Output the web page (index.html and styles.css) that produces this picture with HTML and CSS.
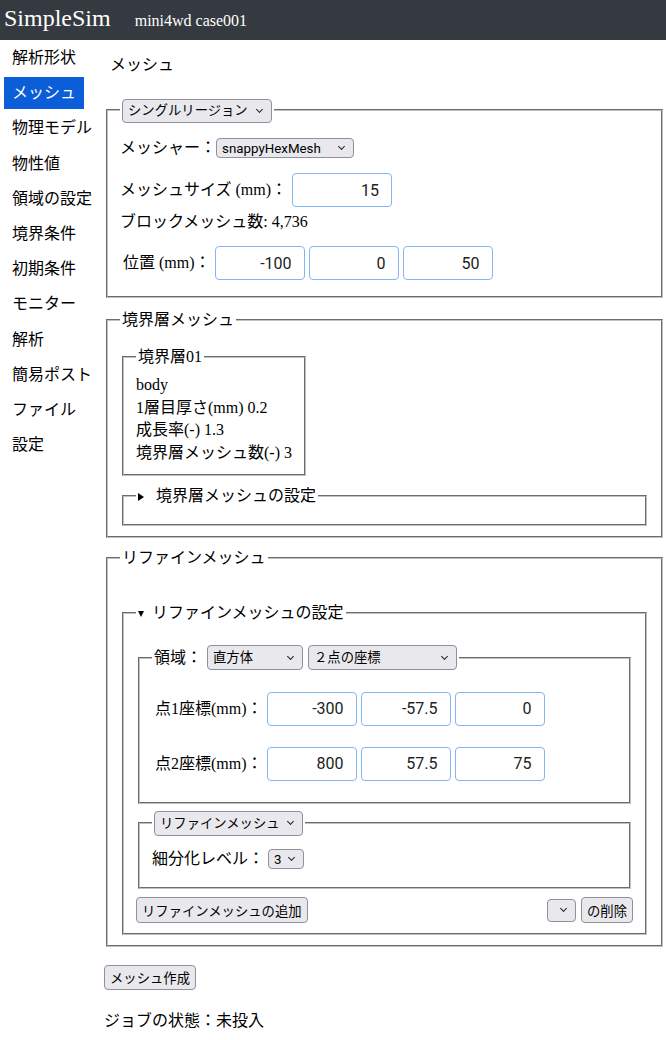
FILE: index.html
```html
<!DOCTYPE html>
<html lang="ja">
<head>
    <meta charset="UTF-8">
    <title>SimpleSim - メッシュ</title>
    <link rel="stylesheet" href="styles.css">
</head>
<body>
    <header class="topbar">
        <span class="brand">SimpleSim</span>
        <span class="case-name">mini4wd case001</span>
    </header>

    <div class="layout">
        <nav class="sidebar">
            <a class="nav-item">解析形状</a>
            <a class="nav-item active">メッシュ</a>
            <a class="nav-item">物理モデル</a>
            <a class="nav-item">物性値</a>
            <a class="nav-item">領域の設定</a>
            <a class="nav-item">境界条件</a>
            <a class="nav-item">初期条件</a>
            <a class="nav-item">モニター</a>
            <a class="nav-item">解析</a>
            <a class="nav-item">簡易ポスト</a>
            <a class="nav-item">ファイル</a>
            <a class="nav-item">設定</a>
        </nav>

        <main class="content">
            <h2 class="page-title">メッシュ</h2>

            <!-- ベースメッシュ -->
            <fieldset class="group">
                <legend>
                    <span class="sel"><select class="sel-region"><option>シングルリージョン</option></select></span>
                </legend>
                <div class="row row-mesher">
                    <span class="label">メッシャー：</span>
                    <span class="sel"><select class="sel-mesher"><option>snappyHexMesh</option></select></span>
                </div>
                <div class="row row-size">
                    <span class="label">メッシュサイズ (mm)：</span>
                    <input class="num num-wide" type="text" value="15">
                </div>
                <div class="row row-count">ブロックメッシュ数: 4,736</div>
                <div class="row row-pos">
                    <span class="label indent">位置 (mm)：</span>
                    <input class="num" type="text" value="-100">
                    <input class="num" type="text" value="0">
                    <input class="num" type="text" value="50">
                </div>
            </fieldset>

            <!-- 境界層 -->
            <fieldset class="group spaced">
                <legend>境界層メッシュ</legend>
                <fieldset class="layer-box">
                    <legend>境界層01</legend>
                    <div class="layer-lines">
                        <div>body</div>
                        <div>1層目厚さ(mm) 0.2</div>
                        <div>成長率(-) 1.3</div>
                        <div>境界層メッシュ数(-) 3</div>
                    </div>
                </fieldset>
                <fieldset class="collapsed">
                    <legend><span class="tri-right"></span>境界層メッシュの設定</legend>
                </fieldset>
            </fieldset>

            <!-- リファイン -->
            <fieldset class="group refine-group">
                <legend>リファインメッシュ</legend>
                <fieldset class="refine-box">
                    <legend><span class="tri-down"></span>リファインメッシュの設定</legend>

                    <fieldset class="region-box">
                        <legend class="legend-row">
                            領域：
                            <span class="sel"><select class="sel-shape"><option>直方体</option></select></span>
                            <span class="sel"><select class="sel-method"><option>２点の座標</option></select></span>
                        </legend>
                        <div class="coords">
                            <div class="row">
                                <span class="label indent">点1座標(mm)：</span>
                                <input class="num" type="text" value="-300">
                                <input class="num" type="text" value="-57.5">
                                <input class="num" type="text" value="0">
                            </div>
                            <div class="row">
                                <span class="label indent">点2座標(mm)：</span>
                                <input class="num" type="text" value="800">
                                <input class="num" type="text" value="57.5">
                                <input class="num" type="text" value="75">
                            </div>
                        </div>
                    </fieldset>

                    <fieldset class="level-box">
                        <legend>
                            <span class="sel"><select class="sel-refine"><option>リファインメッシュ</option></select></span>
                        </legend>
                        <div class="row row-level">
                            <span class="label">細分化レベル：</span>
                            <span class="sel"><select class="sel-level"><option>3</option></select></span>
                        </div>
                    </fieldset>

                    <div class="actions">
                        <button class="btn">リファインメッシュの追加</button>
                        <div class="actions-right">
                            <span class="sel"><select class="sel-empty"><option></option></select></span>
                            <button class="btn">の削除</button>
                        </div>
                    </div>
                </fieldset>
            </fieldset>

            <button class="btn btn-make">メッシュ作成</button>
            <p class="job-status">ジョブの状態：未投入</p>
        </main>
    </div>
</body>
</html>
```

FILE: styles.css
```css
body {
    margin: 0;
    padding: 0;
    font-family: "Liberation Serif", "Noto Sans CJK JP", serif;
    font-size: 16px;
    color: #000;
    background: #fff;
}

.topbar {
    height: 40px;
    box-sizing: border-box;
    background: #343a40;
    color: #fff;
    display: flex;
    align-items: baseline;
    padding: 0 4px 4px;
    line-height: 36px;
}
.brand {
    font-size: 24px;
}
.case-name {
    font-size: 16px;
    margin-left: 24px;
}

.layout {
    display: flex;
}
.sidebar {
    width: 104px;
    flex: none;
    box-sizing: border-box;
    padding: 2px 0 0 4px;
    display: flex;
    flex-direction: column;
    gap: 3.2px;
}
.nav-item {
    width: 80px;
    height: 32px;
    line-height: 32px;
    padding: 0 8px;
    box-sizing: border-box;
    white-space: nowrap;
    color: #000;
    cursor: pointer;
}
.nav-item.active {
    background: #0b5ed7;
    color: #fff;
}

.content {
    flex: 1;
    min-width: 0;
    padding-right: 1px;
}
.page-title {
    font-size: 16px;
    font-weight: normal;
    line-height: 24px;
    margin: 13px 0 21px 6px;
}

fieldset {
    margin: 0 2px;
    padding: 5.6px 12px 10px;
    border: 2px groove #c0c0c0;
    min-width: 0;
}
legend {
    padding: 0 2px;
    line-height: 24px;
}
.spaced {
    margin-top: 10px;
}

.row {
    display: flex;
    align-items: center;
}
.label {
    line-height: 20px;
    white-space: nowrap;
}
.indent {
    padding-left: 3px;
}
.row-mesher {
    margin-top: 10px;
}
.row-size {
    margin-top: 15px;
    gap: 5px;
}
.row-count {
    margin-top: 3px;
    line-height: 24px;
}
.row-pos {
    margin-top: 12px;
    margin-bottom: 6px;
}
.row-pos .label {
    margin-right: 4px;
}
.row-pos .num + .num,
.coords .num + .num {
    margin-left: 4px;
}

.num {
    width: 90px;
    height: 34px;
    box-sizing: border-box;
    border: 1px solid #86b5f3;
    border-radius: 4px;
    padding: 0 12px;
    text-align: right;
    font-family: Roboto, "Noto Sans", sans-serif;
    font-size: 16px;
    color: #222;
    background: #fff;
}
.num-wide {
    width: 100px;
}

/* select: グレーのボタン風 */
.sel {
    position: relative;
    display: inline-flex;
}
.sel::after {
    content: "";
    position: absolute;
    right: 10px;
    top: 50%;
    width: 4px;
    height: 4px;
    margin-top: -4px;
    border-right: 1.3px solid #222;
    border-bottom: 1.3px solid #222;
    transform: rotate(45deg);
    pointer-events: none;
}
select {
    appearance: none;
    -webkit-appearance: none;
    margin: 0;
    height: 20px;
    box-sizing: border-box;
    padding: 0 20px 0 5px;
    border: 1px solid #8f8f9d;
    border-radius: 4px;
    background: #e9e9ed;
    color: #000;
    font-family: Roboto, "Noto Sans CJK JP", sans-serif;
    font-size: 13.33px;
}
.sel-region {
    width: 150px;
    height: 24px;
}
.sel-mesher {
    width: 138px;
}
.sel-shape {
    width: 96px;
    height: 25px;
}
.sel-method {
    width: 149px;
    height: 25px;
}
.sel-refine {
    width: 149px;
    height: 25px;
}
.sel-level {
    width: 36px;
}
.sel-empty {
    width: 29px;
    height: 23px;
}

.btn {
    height: 26px;
    box-sizing: border-box;
    padding: 0 5px;
    border: 1px solid #8f8f9d;
    border-radius: 4px;
    background: #e9e9ed;
    color: #000;
    font-family: Roboto, "Noto Sans CJK JP", sans-serif;
    font-size: 13.33px;
    cursor: pointer;
}

.layer-box {
    width: fit-content;
    margin-top: 7px;
}
.layer-lines {
    line-height: 22.5px;
}
.collapsed {
    margin-top: 8px;
}
.tri-right {
    display: inline-block;
    width: 0;
    height: 0;
    border-left: 6px solid #000;
    border-top: 4px solid transparent;
    border-bottom: 4px solid transparent;
    margin: 0 12px 1px 0;
    vertical-align: middle;
}
.tri-down {
    display: inline-block;
    width: 0;
    height: 0;
    border-top: 6px solid #000;
    border-left: 3.5px solid transparent;
    border-right: 3.5px solid transparent;
    margin: 0 8px 1px 0;
    vertical-align: middle;
}

.refine-group {
    margin-top: 8px;
}
.refine-box {
    margin-top: 26px;
}
.region-box {
    margin-top: 14px;
}
.legend-row {
    display: flex;
    align-items: center;
    gap: 5px;
}
.coords {
    display: grid;
    row-gap: 21px;
    margin: 16px 0 11px;
}
.coords .label {
    margin-right: 4px;
}
.level-box {
    margin-top: 7px;
}
.row-level {
    margin-top: 4px;
    margin-bottom: 4px;
    height: 28px;
    gap: 4px;
}
.actions {
    display: flex;
    justify-content: space-between;
    align-items: center;
    margin-top: 8px;
}
.actions-right {
    display: flex;
    align-items: center;
    gap: 5px;
}

.btn-make {
    display: block;
    height: 25px;
    margin-top: 18px;
}
.job-status {
    margin: 19px 0 0;
    line-height: 24px;
}
```
